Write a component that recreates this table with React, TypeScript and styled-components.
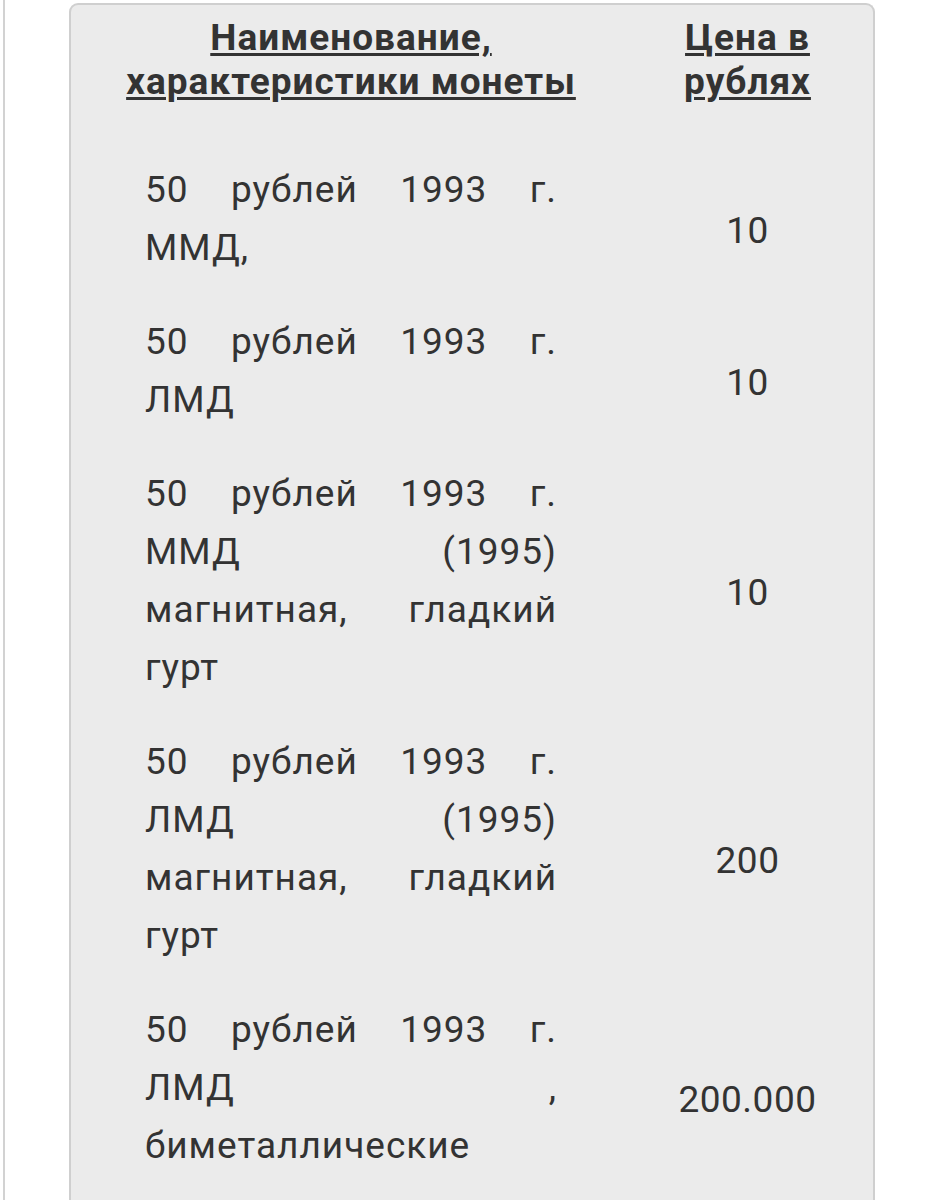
import styled, { createGlobalStyle } from "styled-components";

const GlobalStyle = createGlobalStyle`
  html, body {
    margin: 0;
    padding: 0;
    background: #ffffff;
  }
  body {
    font-family: Roboto, "Noto Sans", Arial, sans-serif;
    color: #333333;
  }
`;

const Page = styled.div`
  margin-left: 3px;
  border-left: 2px solid #d2d2d2;
  padding: 3px 59px 0 64px;
  min-height: 1200px;
  box-sizing: border-box;
`;

const Panel = styled.div`
  width: 806px;
  box-sizing: border-box;
  background: #ebebeb;
  border: 2px solid #cfcfcf;
  border-bottom: none;
  border-radius: 9px 9px 0 0;
  padding: 11px 0 40px 50px;
  min-height: 1240px;
`;

const Row = styled.div<{ $head?: boolean }>`
  display: grid;
  grid-template-columns: 460px 1fr;
  column-gap: 41px;
  align-items: ${(p) => (p.$head ? "start" : "center")};
  padding: ${(p) => (p.$head ? "0 0 51px" : "6px 0")};
`;

const HeadCell = styled.div`
  font-size: 37px;
  letter-spacing: 1px;
  font-weight: 700;
  line-height: 44px;
  text-align: center;
  text-decoration: underline;
  text-decoration-thickness: 3px;
  text-underline-offset: 3px;
`;

const Description = styled.p`
  margin: 0 0 24px;
  padding: 0 24px;
  font-size: 37px;
  letter-spacing: 1px;
  word-spacing: 6px;
  line-height: 58px;
  text-align: justify;
`;

const Price = styled.div`
  font-size: 37px;
  letter-spacing: 0.5px;
  line-height: 58px;
  text-align: center;
`;

const coins = [
  { name: "50 рублей 1993 г. ММД,", price: "10" },
  { name: "50 рублей 1993 г. ЛМД", price: "10" },
  { name: "50 рублей 1993 г. ММД (1995) магнитная, гладкий гурт", price: "10" },
  { name: "50 рублей 1993 г. ЛМД (1995) магнитная, гладкий гурт", price: "200" },
  { name: "50 рублей 1993 г. ЛМД , биметаллические", price: "200.000" },
];

export default function App() {
  return (
    <>
      <GlobalStyle />
      <Page>
        <Panel>
          <Row $head>
            <HeadCell>Наименование, характеристики монеты</HeadCell>
            <HeadCell>Цена в рублях</HeadCell>
          </Row>
          {coins.map((c, i) => (
            <Row key={i}>
              <Description>{c.name}</Description>
              <Price>{c.price}</Price>
            </Row>
          ))}
        </Panel>
      </Page>
    </>
  );
}
